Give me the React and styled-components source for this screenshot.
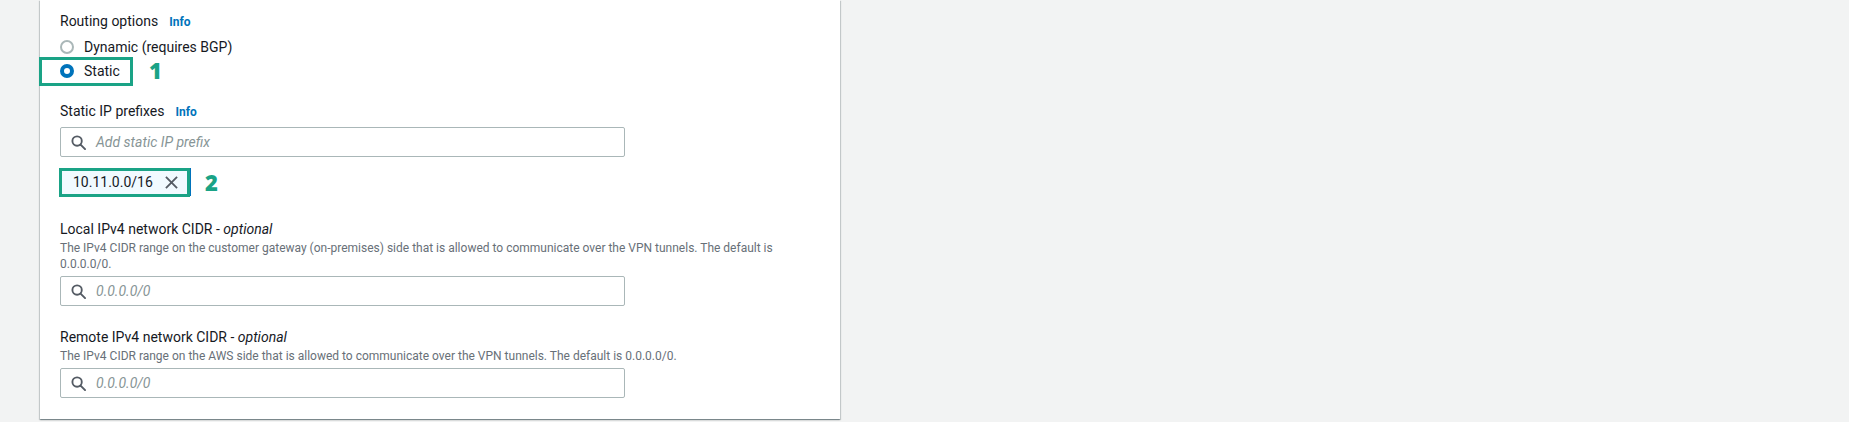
import React from 'react';
import styled, { createGlobalStyle } from 'styled-components';

const GlobalStyle = createGlobalStyle`
  html, body {
    margin: 0;
    padding: 0;
    height: 100%;
    background: #f2f3f3;
  }
  body {
    font-family: Roboto, "Helvetica Neue", Arial, sans-serif;
    color: #16191f;
    -webkit-font-smoothing: antialiased;
  }
`;

const MARK = '#1aa386';

const Page = styled.div`
  padding-left: 40px;
  min-height: 422px;
  box-sizing: border-box;
`;

const Panel = styled.section`
  width: 800px;
  box-sizing: border-box;
  background: #fff;
  padding: 10px 20px 21px;
  box-shadow: 0 1px 1px 0 rgba(0, 28, 36, 0.3), 1px 1px 1px 0 rgba(0, 28, 36, 0.15),
    -1px 1px 1px 0 rgba(0, 28, 36, 0.15);
  display: flex;
  flex-direction: column;
`;

const Field = styled.div`
  display: flex;
  flex-direction: column;
  margin-top: ${(p) => p.$gap || 0}px;
`;

const Label = styled.div`
  font-size: 14px;
  line-height: 22px;
  display: flex;
  align-items: baseline;
  gap: 11px;
  em {
    font-style: italic;
  }
`;

const Info = styled.a`
  font-size: 12px;
  font-weight: 700;
  color: #0073bb;
  text-decoration: none;
`;

const Desc = styled.div`
  font-size: 12px;
  line-height: 16px;
  color: #687078;
  max-width: 760px;
`;

const RadioGroup = styled.div`
  display: flex;
  flex-direction: column;
  margin-top: 2px;
`;

const RadioRow = styled.label`
  position: relative;
  display: flex;
  align-items: center;
  gap: 10px;
  height: 24px;
  font-size: 14px;
  width: max-content;
`;

const RadioDot = styled.span`
  width: 14px;
  height: 14px;
  box-sizing: border-box;
  border-radius: 50%;
  background: #fff;
  border: ${(p) => (p.$checked ? '4px solid #0073bb' : '2px solid #aab7b8')};
`;

const Highlight = styled.span`
  position: absolute;
  left: ${(p) => p.$left}px;
  top: ${(p) => p.$top}px;
  width: ${(p) => p.$w}px;
  height: ${(p) => p.$h}px;
  box-sizing: border-box;
  border: 3px solid ${MARK};
  pointer-events: none;
`;

const Marker = styled.span`
  position: absolute;
  left: ${(p) => p.$left}px;
  top: ${(p) => p.$top}px;
  font-size: 22px;
  line-height: 22px;
  font-weight: 800;
  color: ${MARK};
  font-family: "Open Sans", Arial, sans-serif;
`;

const SearchBox = styled.div`
  margin-top: 4px;
  width: 565px;
  height: 30px;
  box-sizing: border-box;
  border: 1px solid #aab7b8;
  border-radius: 2px;
  display: flex;
  align-items: center;
  padding-left: 10px;
  gap: 10px;
  color: #545b64;
`;

const Placeholder = styled.span`
  font-size: 14px;
  font-style: italic;
  color: #879596;
`;

const TokenWrap = styled.div`
  position: relative;
  margin-top: 11px;
  width: max-content;
`;

const Token = styled.div`
  display: flex;
  align-items: center;
  gap: 12px;
  height: 28px;
  box-sizing: border-box;
  padding: 0 11px 0 12px;
  background: #f1faff;
  border: 1px solid #0073bb;
  font-size: 14px;
  width: 131px;
  color: #16191f;
`;

const Search = () => (
  <svg width="15" height="15" viewBox="0 0 16 16" fill="none" stroke="#545b64" strokeWidth="2">
    <circle cx="6.5" cy="6.5" r="5" />
    <path d="M10.2 10.2 L15 15" strokeLinecap="round" />
  </svg>
);

const Close = () => (
  <svg width="13" height="13" viewBox="0 0 14 14" fill="none" stroke="#545b64" strokeWidth="2">
    <path d="M1 1 L13 13 M13 1 L1 13" />
  </svg>
);

const App = () => (
  <>
    <GlobalStyle />
    <Page>
      <Panel>
        <Field>
          <Label>
            Routing options <Info href="#">Info</Info>
          </Label>
          <RadioGroup>
            <RadioRow>
              <RadioDot />
              Dynamic (requires BGP)
            </RadioRow>
            <RadioRow>
              <RadioDot $checked />
              Static
              <Highlight $left={-21} $top={-2} $w={94} $h={29} />
              <Marker $left={89} $top={0}>1</Marker>
            </RadioRow>
          </RadioGroup>
        </Field>

        <Field $gap={17}>
          <Label>
            Static IP prefixes <Info href="#">Info</Info>
          </Label>
          <SearchBox>
            <Search />
            <Placeholder>Add static IP prefix</Placeholder>
          </SearchBox>
          <TokenWrap>
            <Token>
              10.11.0.0/16
              <Close />
            </Token>
            <Highlight $left={-1} $top={0} $w={131} $h={29} />
            <Marker $left={145} $top={3}>2</Marker>
          </TokenWrap>
        </Field>

        <Field $gap={22}>
          <Label>
            <span>
              Local IPv4 network CIDR - <em>optional</em>
            </span>
          </Label>
          <Desc>
            The IPv4 CIDR range on the customer gateway (on-premises) side that is allowed to
            communicate over the VPN tunnels. The default is 0.0.0.0/0.
          </Desc>
          <SearchBox>
            <Search />
            <Placeholder>0.0.0.0/0</Placeholder>
          </SearchBox>
        </Field>

        <Field $gap={20}>
          <Label>
            <span>
              Remote IPv4 network CIDR - <em>optional</em>
            </span>
          </Label>
          <Desc>
            The IPv4 CIDR range on the AWS side that is allowed to communicate over the VPN
            tunnels. The default is 0.0.0.0/0.
          </Desc>
          <SearchBox>
            <Search />
            <Placeholder>0.0.0.0/0</Placeholder>
          </SearchBox>
        </Field>
      </Panel>
    </Page>
  </>
);

export default App;
